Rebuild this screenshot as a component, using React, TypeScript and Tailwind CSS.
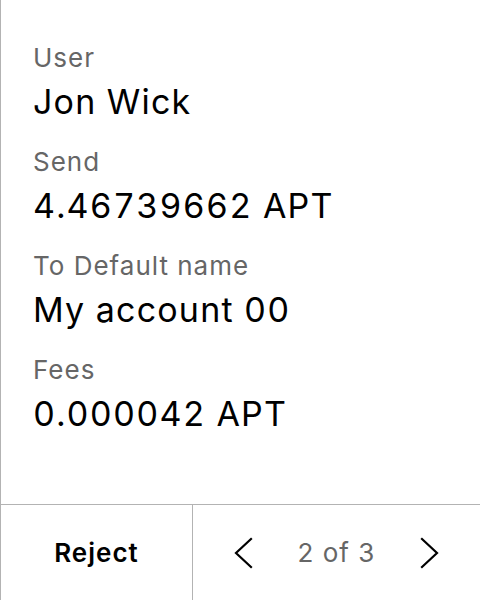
const rows = [
  { label: "User", value: "Jon Wick" },
  { label: "Send", value: "4.46739662 APT" },
  { label: "To Default name", value: "My account 00" },
  { label: "Fees", value: "0.000042 APT" },
];

function Chevron({ dir }: { dir: "left" | "right" }) {
  return (
    <svg width="24" height="32" viewBox="0 0 24 32" fill="none" stroke="#000" strokeWidth="2.2" strokeLinecap="square">
      {dir === "left" ? <polyline points="19,2 4,16 19,30" /> : <polyline points="5,2 20,16 5,30" />}
    </svg>
  );
}

export default function App() {
  return (
    <main
      className="flex h-[600px] w-[480px] flex-col border-l border-[#b3b3b3] bg-white text-black"
      style={{ fontFamily: "Inter, 'Noto Sans', sans-serif" }}
    >
      <section className="flex flex-1 flex-col gap-6 px-8 pt-[42px]">
        {rows.map((row) => (
          <div key={row.label} className="flex flex-col gap-2">
            <span className="text-[26px] leading-8 tracking-[1px] text-[#666666]">{row.label}</span>
            <span className="text-[34px] leading-10 tracking-[1.2px] tabular-nums">{row.value}</span>
          </div>
        ))}
      </section>
      <footer className="flex h-[96px] border-t border-[#b3b3b3]">
        <button className="flex w-[192px] items-center justify-center border-r border-[#b3b3b3] text-[26px] font-semibold tracking-[1px]">
          Reject
        </button>
        <div className="flex flex-1 items-center justify-center gap-[42px]">
          <Chevron dir="left" />
          <span className="text-[26px] tracking-[1px] text-[#666666]">2 of 3</span>
          <Chevron dir="right" />
        </div>
      </footer>
    </main>
  );
}
